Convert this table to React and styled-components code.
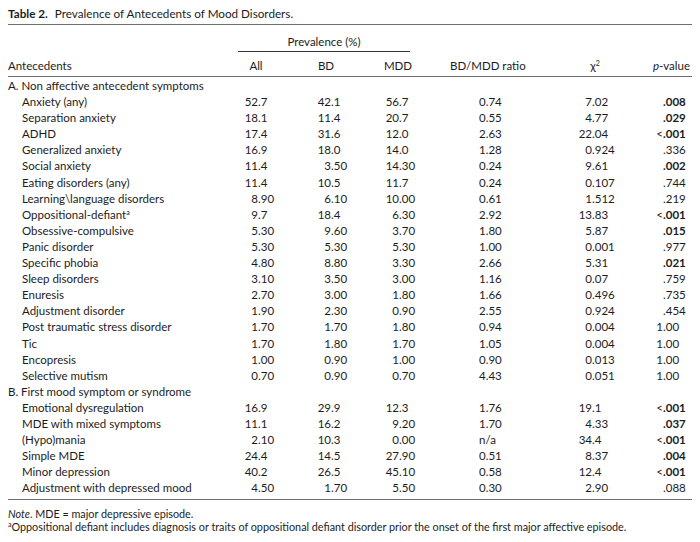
import React from 'react'
import styled, { createGlobalStyle } from 'styled-components'

const GlobalStyle = createGlobalStyle`
  html, body {
    margin: 0;
    padding: 0;
    background: #fff;
  }
  body {
    font-family: Lato, "Liberation Sans", sans-serif;
    color: #1c1c1c;
  }
`

// label | All | BD | MDD | ratio | chi2 | p
const COLS = '214px 68px 72px 72px 116px 90px 52px'

// decimal point offset (px from column start) for each numeric column
const DEC = [36, 41, 37, 51, 42, 23]

const Page = styled.div`
  width: 684px;
  padding: 0 8px;
  font-size: 11.5px;
`

const Title = styled.div`
  padding-top: 3px;
  height: 21px;
  line-height: 20px;
  font-size: 11.7px;
  border-bottom: 1.5px solid #6f6f6f;
`

const TitleLabel = styled.b`
  font-weight: 700;
  margin-right: 4px;
`

const Head = styled.div`
  display: grid;
  grid-template-columns: ${COLS};
  padding-top: 9px;
  padding-bottom: 2px;
  border-bottom: 1.5px solid #6f6f6f;
`

const Spanner = styled.div`
  grid-column: 2 / 5;
  margin: 0 24px 0 16px;
  text-align: center;
  line-height: 16px;
  padding-bottom: 1px;
  border-bottom: 1px solid #333;
`

const HeadCell = styled.div`
  grid-row: 2;
  margin-top: 6px;
  line-height: 16px;
  text-align: ${p => p.$align || 'center'};
  padding-left: ${p => p.$pl || 0}px;
  padding-right: ${p => p.$pr || 0}px;
`

const Body = styled.div`
  padding-top: 1px;
  padding-bottom: 3px;
  border-bottom: 1.5px solid #6f6f6f;
`

const Row = styled.div`
  display: grid;
  grid-template-columns: ${COLS};
  height: 16.1px;
  line-height: 16.1px;
  white-space: nowrap;
`

const Section = styled.div`
  grid-column: 1 / -1;
`

const Label = styled.div`
  padding-left: 14px;
`

const Num = styled.div`
  display: flex;
  padding-left: ${p => p.$pl || 0}px;
`

const Int = styled.span`
  width: ${p => p.$w}px;
  text-align: right;
  flex: none;
`

const Frac = styled.span`
  font-weight: ${p => (p.$bold ? 700 : 400)};
`

const Sup = styled.sup`
  font-size: 7px;
  line-height: 0;
  vertical-align: 4px;
`

const Notes = styled.div`
  padding-top: 7px;
  font-size: 10.8px;
  line-height: 13px;
`

const sectionA = [
  ['Anxiety (any)', '52.7', '42.1', '56.7', '0.74', '7.02', '.008', true],
  ['Separation anxiety', '18.1', '11.4', '20.7', '0.55', '4.77', '.029', true],
  ['ADHD', '17.4', '31.6', '12.0', '2.63', '22.04', '<.001', true],
  ['Generalized anxiety', '16.9', '18.0', '14.0', '1.28', '0.924', '.336'],
  ['Social anxiety', '11.4', '3.50', '14.30', '0.24', '9.61', '.002', true],
  ['Eating disorders (any)', '11.4', '10.5', '11.7', '0.24', '0.107', '.744'],
  ['Learning\\language disorders', '8.90', '6.10', '10.00', '0.61', '1.512', '.219'],
  ['Oppositional-defiant', '9.7', '18.4', '6.30', '2.92', '13.83', '<.001', true, 'a'],
  ['Obsessive-compulsive', '5.30', '9.60', '3.70', '1.80', '5.87', '.015', true],
  ['Panic disorder', '5.30', '5.30', '5.30', '1.00', '0.001', '.977'],
  ['Specific phobia', '4.80', '8.80', '3.30', '2.66', '5.31', '.021', true],
  ['Sleep disorders', '3.10', '3.50', '3.00', '1.16', '0.07', '.759'],
  ['Enuresis', '2.70', '3.00', '1.80', '1.66', '0.496', '.735'],
  ['Adjustment disorder', '1.90', '2.30', '0.90', '2.55', '0.924', '.454'],
  ['Post traumatic stress disorder', '1.70', '1.70', '1.80', '0.94', '0.004', '1.00'],
  ['Tic', '1.70', '1.80', '1.70', '1.05', '0.004', '1.00'],
  ['Encopresis', '1.00', '0.90', '1.00', '0.90', '0.013', '1.00'],
  ['Selective mutism', '0.70', '0.90', '0.70', '4.43', '0.051', '1.00'],
]

const sectionB = [
  ['Emotional dysregulation', '16.9', '29.9', '12.3', '1.76', '19.1', '<.001', true],
  ['MDE with mixed symptoms', '11.1', '16.2', '9.20', '1.70', '4.33', '.037', true],
  ['(Hypo)mania', '2.10', '10.3', '0.00', 'n/a', '34.4', '<.001', true],
  ['Simple MDE', '24.4', '14.5', '27.90', '0.51', '8.37', '.004', true],
  ['Minor depression', '40.2', '26.5', '45.10', '0.58', '12.4', '<.001', true],
  ['Adjustment with depressed mood', '4.50', '1.70', '5.50', '0.30', '2.90', '.088'],
]

const Cell = ({ value, col, bold }) => {
  // ratio column is left aligned (all d.dd plus one n/a)
  if (col === 3) {
    return <Num $pl={DEC[col] - 6}>{value}</Num>
  }
  const i = value.indexOf('.')
  const int = i < 0 ? value : value.slice(0, i)
  const frac = i < 0 ? '' : value.slice(i)
  return (
    <Num>
      <Int $w={DEC[col]}>{int}</Int>
      <Frac $bold={bold}>{frac}</Frac>
    </Num>
  )
}

const DataRow = ({ row }) => {
  const [name, ...rest] = row
  const nums = rest.slice(0, 6)
  const bold = rest[6]
  const sup = rest[7]
  return (
    <Row>
      <Label>
        {name}
        {sup && <Sup>{sup}</Sup>}
      </Label>
      {nums.map((v, i) => (
        <Cell key={i} value={v} col={i} bold={i === 5 && bold} />
      ))}
    </Row>
  )
}

const App = () => {
  return (
    <Page>
      <GlobalStyle />
      <Title>
        <TitleLabel>Table 2.</TitleLabel> Prevalence of Antecedents of Mood Disorders.
      </Title>
      <Head>
        <Spanner>Prevalence (%)</Spanner>
        <HeadCell $align="left">Antecedents</HeadCell>
        <HeadCell>All</HeadCell>
        <HeadCell>BD</HeadCell>
        <HeadCell>MDD</HeadCell>
        <HeadCell $align="left" $pl={16}>BD/MDD ratio</HeadCell>
        <HeadCell>
          χ<Sup>2</Sup>
        </HeadCell>
        <HeadCell $align="right" $pr={2}>
          <i>p</i>-value
        </HeadCell>
      </Head>
      <Body>
        <Row>
          <Section>A. Non affective antecedent symptoms</Section>
        </Row>
        {sectionA.map(r => (
          <DataRow key={r[0]} row={r} />
        ))}
        <Row>
          <Section>B. First mood symptom or syndrome</Section>
        </Row>
        {sectionB.map(r => (
          <DataRow key={r[0]} row={r} />
        ))}
      </Body>
      <Notes>
        <div>
          <i>Note</i>. MDE = major depressive episode.
        </div>
        <div>
          <Sup>a</Sup>Oppositional defiant includes diagnosis or traits of oppositional defiant disorder prior the onset of the first major affective episode.
        </div>
      </Notes>
    </Page>
  )
}

export default App
